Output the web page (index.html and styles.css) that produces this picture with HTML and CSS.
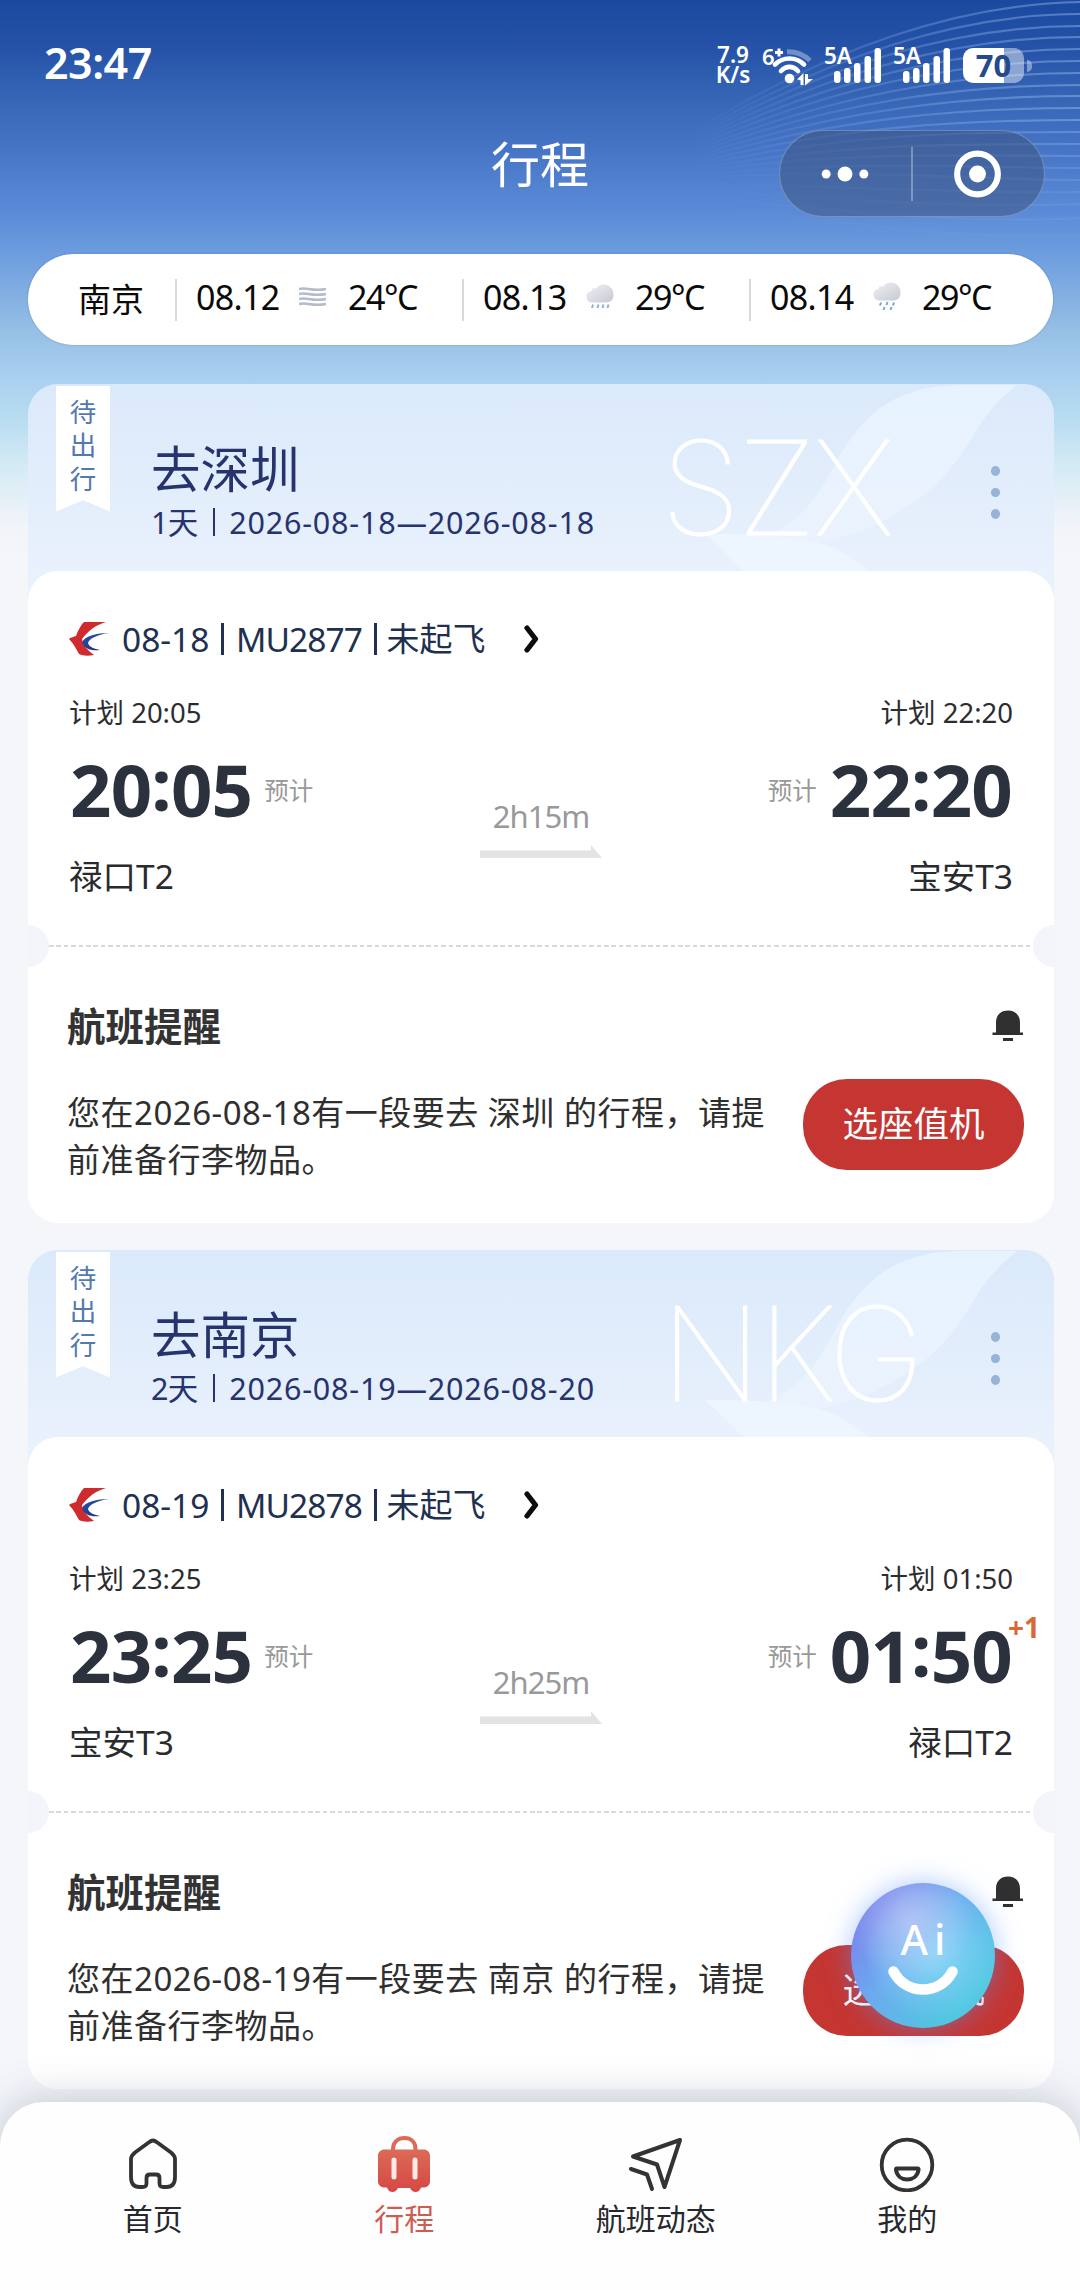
FILE: index.html
```html
<!DOCTYPE html>
<html lang="zh-CN">
<head>
<meta charset="utf-8">
<title>行程</title>
<link rel="stylesheet" href="styles.css">
</head>
<body>
<svg class="defs" aria-hidden="true">
  <defs>
    <linearGradient id="tail" x1="0" y1="0" x2="1" y2="1">
      <stop offset="0" stop-color="#2b52b5"/><stop offset="1" stop-color="#1f2a6b"/>
    </linearGradient>
    <linearGradient id="leafFill" x1="0" y1="0" x2="0" y2="1">
      <stop offset="0" stop-color="#e6f3ff"/><stop offset="1" stop-color="#ebf2fd"/>
    </linearGradient>
    <linearGradient id="cloudFill" x1="0" y1="0" x2="1" y2="1">
      <stop offset="0" stop-color="#f1f1f5"/><stop offset="1" stop-color="#c6c9d2"/>
    </linearGradient>
    <linearGradient id="caseFill" x1="0" y1="0" x2="0" y2="1">
      <stop offset="0" stop-color="#dc6a56"/><stop offset="1" stop-color="#d54845"/>
    </linearGradient>
    <symbol id="airline" viewBox="0 0 40 34">
      <path d="M15 0H37C27 3 20 8 13 17C14 23 18 28 25 33C19 34 14 34 10 32C7 27 5 22 0 17C2 15 5 15 7 14C9 8 12 3 15 0Z" fill="#cf2b2f"/>
      <path d="M40 11C27 13 20 17 19 21C20 25 26 27 31 28C22 29 15 27 13 20C16 14 28 11 40 11Z" fill="url(#tail)"/>
    </symbol>
    <symbol id="chevron" viewBox="0 0 16 28">
      <path d="M3 3L11.500 14L3 25" fill="none" stroke="#0c0c0c" stroke-width="5.200" stroke-linecap="round" stroke-linejoin="round"/>
    </symbol>
    <symbol id="arrow" viewBox="0 0 122 14">
      <path d="M0 5.500H111V0L122 13H0Z" fill="#e3e3e3"/>
    </symbol>
    <symbol id="bell" viewBox="0 0 32 32">
      <path d="M4 22.500V12.500C4 5 9 0.500 16 0.500S28 5 28 12.500V22.500H31V25H0.500V22.500Z" fill="#303030"/>
      <rect x="11" y="28" width="10" height="3" fill="#303030"/>
    </symbol>
    <symbol id="leaf" viewBox="0 0 360 187">
      <path d="M324 1H262C200 3 168 30 140 82C110 140 80 160 24 153C70 172 130 163 180 142C240 112 262 82 283 45C296 24 312 9 324 1Z" fill="url(#leafFill)"/>
      <path d="M10 150C60 150 110 152 140 164C155 171 165 180 174 187H50C38 177 26 162 10 150Z" fill="#edf5fe"/>
    </symbol>
    <symbol id="bars" viewBox="0 0 48 36">
      <g fill="#fff">
        <rect x="0" y="23" width="6.500" height="12" rx="3"/>
        <rect x="10" y="20" width="6.500" height="15" rx="3"/>
        <rect x="20" y="15" width="6.500" height="20" rx="3"/>
        <rect x="30.500" y="8" width="6.500" height="27" rx="3"/>
        <rect x="40.500" y="0" width="6.500" height="35" rx="3"/>
      </g>
    </symbol>
    <symbol id="cloud" viewBox="0 0 28 16" preserveAspectRatio="none">
      <path d="M6 15.500C2.500 15.500 0.500 13.300 0.500 10.500S2.700 6 5.500 5.900C6.500 2.500 9 3.500 10.300 4C11.800 1.500 14.500 0.500 17.500 0.500C23.300 0.500 27.500 4.200 27.500 8.800S24.500 15.500 20 15.500Z" fill="url(#cloudFill)"/>
    </symbol>
  </defs>
</svg>

<div class="screen">
  <svg class="ripples" viewBox="0 0 400 254" aria-hidden="true">
    <defs>
      <linearGradient id="ripple" gradientUnits="userSpaceOnUse" x1="10" y1="0" x2="400" y2="0">
        <stop offset="0" stop-color="#9fc0f2" stop-opacity="0"/>
        <stop offset="0.400" stop-color="#9fc0f2" stop-opacity="0.200"/>
        <stop offset="1" stop-color="#9fc0f2" stop-opacity="0.450"/>
      </linearGradient>
    </defs>
    <g fill="none" stroke="url(#ripple)" stroke-width="2.200">
      <path d="M400 2C290 4 160 40 10 134"/>
      <path d="M400 14C290 14 160 49 10 137"/>
      <path d="M400 26C290 26 160 57 10 140"/>
      <path d="M400 37C290 37 160 66 10 143"/>
      <path d="M400 49C290 49 160 74 10 146"/>
      <path d="M400 61C290 61 160 82 10 149"/>
      <path d="M400 73C290 73 160 91 10 152"/>
      <path d="M400 85C290 85 160 99 10 155"/>
      <path d="M400 96C290 96 160 108 10 158"/>
      <path d="M400 108C290 108 160 116 10 161"/>
      <path d="M400 120C290 120 160 125 10 164"/>
      <path d="M400 132C290 132 160 133 10 167" opacity="0.800"/>
      <path d="M400 144C290 144 160 142 10 170" opacity="0.700"/>
      <path d="M400 156C290 156 160 150 10 173" opacity="0.600"/>
      <path d="M400 168C290 168 160 159 10 176" opacity="0.500"/>
      <path d="M400 180C290 180 160 167 10 179" opacity="0.450"/>
      <path d="M400 192C290 194 160 186 10 184" opacity="0.350"/>
      <path d="M400 204C290 208 160 200 10 190" opacity="0.300"/>
      <path d="M400 218C290 224 160 212 10 196" opacity="0.250"/>
      <path d="M400 236C290 240 160 224 10 202" opacity="0.150"/>
    </g>
  </svg>

  <header class="status">
    <div class="clock">23:47</div>
    <div class="indicators">
      <div class="speed"><span>7.9</span><span>K/s</span></div>
      <svg class="wifi" viewBox="0 0 50 38">
        <text class="wifi-gen" x="-1" y="17">6</text>
        <path d="M12 4.500H20M16 0.500V8.500" stroke="#fff" stroke-width="3" fill="none"/>
        <g fill="none" stroke="#fff" stroke-linecap="round">
          <path d="M24 3.800C33 3.500 41 7 47 12.500" stroke-width="5" opacity="0.350" stroke-linecap="butt"/>
          <path d="M12 16.500C20 8.500 33 8.500 41 16.500" stroke-width="4.600"/>
          <path d="M18 23C23 17.500 30 17.500 35 23" stroke-width="4.600"/>
        </g>
        <circle cx="26.500" cy="30.500" r="4.800" fill="#fff"/>
        <path d="M34 31.500L40.500 25V37H37.500V32ZM42 26H45V31H50L42 37.500Z" fill="#fff"/>
      </svg>
      <div class="signal"><span class="net">5A</span><svg class="signal-bars"><use href="#bars"/></svg></div>
      <div class="signal"><span class="net">5A</span><svg class="signal-bars"><use href="#bars"/></svg></div>
      <div class="battery"><div class="cell">70</div><div class="nub"></div></div>
    </div>
  </header>

  <nav class="titlebar">
    <h1 class="page-title">行程</h1>
    <div class="capsule">
      <svg class="more" viewBox="0 0 132 86"><g fill="#fff"><circle cx="46.500" cy="43" r="4.500"/><circle cx="65.500" cy="43" r="7.500"/><circle cx="84.500" cy="43" r="4.500"/></g></svg>
      <div class="capsule-line"></div>
      <svg class="close" viewBox="0 0 132 86"><circle cx="65" cy="43" r="20.500" fill="none" stroke="#fff" stroke-width="6.200"/><circle cx="65" cy="43" r="8.500" fill="#fff"/></svg>
    </div>
  </nav>

  <section class="weather">
    <div class="city">南京</div>
    <div class="day"><span class="date">08.12</span>
      <svg class="wx" viewBox="0 0 28 28"><g fill="none" stroke="#b4bbcc" stroke-width="2.600"><path d="M0 7C8 4.500 12 10 27 7"/><path d="M0 12C8 9.500 12 15 27 12"/><path d="M0 17C8 14.500 12 20 27 17"/><path d="M0 22C8 19.500 12 25 27 22"/></g></svg>
      <span class="temp">24°C</span></div>
    <div class="day"><span class="date">08.13</span>
      <svg class="wx" viewBox="0 0 28 28"><use href="#cloud" y="2" width="28" height="19"/><g stroke="#8fb2d6" stroke-width="2"><path d="M7 22.500L6 26M12.500 22.500L11.500 26M17.500 22.500L16.500 26M22.500 22.500L21.500 26"/></g></svg>
      <span class="temp">29°C</span></div>
    <div class="day"><span class="date">08.14</span>
      <svg class="wx" viewBox="0 0 28 28"><use href="#cloud" y="0" width="28" height="19"/><g stroke="#7aa5d2" stroke-width="2"><path d="M8 20.500L7 23.500M14.500 20L13.500 23M21 20.500L20 23.500M11.500 25L10.500 28M18.500 25L17.500 28"/></g></svg>
      <span class="temp">29°C</span></div>
  </section>

  <main class="trips">
    <article class="trip">
      <header class="trip-head">
        <svg class="leaf"><use href="#leaf"/></svg>
        <div class="ribbon"><span>待</span><span>出</span><span>行</span></div>
        <div class="trip-name">
          <h2 class="dest">去深圳</h2>
          <p class="range"><span>1天</span><i class="bar"></i><span class="dates">2026-08-18—2026-08-18</span></p>
        </div>
        <div class="code">SZX</div>
        <div class="menu"><i></i><i></i><i></i></div>
      </header>
      <div class="trip-body">
        <div class="flight">
          <svg class="airline"><use href="#airline"/></svg>
          <span>08-18</span><i class="bar"></i><span class="number">MU2877</span><i class="bar"></i><span class="state">未起飞</span>
          <svg class="chevron"><use href="#chevron"/></svg>
        </div>
        <div class="legs">
          <div class="leg">
            <div class="plan">计划 20:05</div>
            <div class="actual"><b class="time">20<span class="colon">:</span>05</b><span class="est">预计</span></div>
            <div class="terminal">禄口T2</div>
          </div>
          <div class="duration"><span>2h15m</span><svg class="arrow"><use href="#arrow"/></svg></div>
          <div class="leg arrive">
            <div class="plan">计划 22:20</div>
            <div class="actual"><span class="est">预计</span><b class="time">22<span class="colon">:</span>20</b></div>
            <div class="terminal">宝安T3</div>
          </div>
        </div>
        <div class="tear"></div>
        <div class="notice">
          <div class="notice-head"><h3>航班提醒</h3><svg class="bell"><use href="#bell"/></svg></div>
          <div class="notice-row">
            <p>您在2026-08-18有一段要去 深圳 的行程，请提<br>前准备行李物品。</p>
            <button class="checkin">选座值机</button>
          </div>
        </div>
      </div>
    </article>

    <article class="trip">
      <header class="trip-head">
        <svg class="leaf"><use href="#leaf"/></svg>
        <div class="ribbon"><span>待</span><span>出</span><span>行</span></div>
        <div class="trip-name">
          <h2 class="dest">去南京</h2>
          <p class="range"><span>2天</span><i class="bar"></i><span class="dates">2026-08-19—2026-08-20</span></p>
        </div>
        <div class="code">NKG</div>
        <div class="menu"><i></i><i></i><i></i></div>
      </header>
      <div class="trip-body">
        <div class="flight">
          <svg class="airline"><use href="#airline"/></svg>
          <span>08-19</span><i class="bar"></i><span class="number">MU2878</span><i class="bar"></i><span class="state">未起飞</span>
          <svg class="chevron"><use href="#chevron"/></svg>
        </div>
        <div class="legs">
          <div class="leg">
            <div class="plan">计划 23:25</div>
            <div class="actual"><b class="time">23<span class="colon">:</span>25</b><span class="est">预计</span></div>
            <div class="terminal">宝安T3</div>
          </div>
          <div class="duration"><span>2h25m</span><svg class="arrow"><use href="#arrow"/></svg></div>
          <div class="leg arrive">
            <div class="plan">计划 01:50</div>
            <div class="actual"><span class="est">预计</span><b class="time">01<span class="colon">:</span>50</b><sup class="plus">+1</sup></div>
            <div class="terminal">禄口T2</div>
          </div>
        </div>
        <div class="tear"></div>
        <div class="notice">
          <div class="notice-head"><h3>航班提醒</h3><svg class="bell"><use href="#bell"/></svg></div>
          <div class="notice-row">
            <p>您在2026-08-19有一段要去 南京 的行程，请提<br>前准备行李物品。</p>
            <button class="checkin">选座值机</button>
          </div>
        </div>
      </div>
    </article>
  </main>

  <div class="assistant">
    <span class="assistant-name">Ai</span>
    <svg class="smile" viewBox="0 0 70 30"><path d="M5.500 5.500C18 29.500 52 29.500 64.500 5.500" fill="none" stroke="#fff" stroke-width="10.500" stroke-linecap="round"/></svg>
  </div>

  <footer class="tabs">
    <a class="tab"><svg class="tab-icon" viewBox="0 0 56 56"><path d="M28 4.500C30 4.500 31 5.500 33 7L46 16.500C49 19 50 20 50 23V41C50 47.500 47 51 41.500 51H38.500C35.500 51 34.500 50 34.500 47V42C34.500 39.500 33.500 38.500 31 38.500H25C22.500 38.500 21.500 39.500 21.500 42V47C21.500 50 20.500 51 17.500 51H14.500C9 51 6 47.500 6 41V23C6 20 7 19 10 16.500L23 7C25 5.500 26 4.500 28 4.500Z" fill="none" stroke="#333" stroke-width="3.800"/></svg><span>首页</span></a>
    <a class="tab active"><svg class="tab-icon" viewBox="0 0 56 56"><path d="M17 15V13C17 6 22 2 28.500 2S39.500 6 39.500 13V15" fill="none" stroke="#dc6a56" stroke-width="4"/><path d="M9 13.500H47C51.500 13.500 54 16 54 20V45C54 49 51.500 51.500 47 51.500H45C44 54.500 42 56 39.500 56S35.500 54.500 34 52H22C20.500 54.500 19 56 16.500 56S12 54.500 11 51.500H9C4.500 51.500 2 49 2 45V20C2 16 4.500 13.500 9 13.500Z" fill="url(#caseFill)"/><path d="M18 24V41M39 24V41" stroke="#ffe9e6" stroke-width="5" stroke-linecap="round"/></svg><span>行程</span></a>
    <a class="tab"><svg class="tab-icon" viewBox="0 0 56 56"><path d="M52 4L5 20.500L29 28.500L36.500 51L52 4Z" fill="none" stroke="#333" stroke-width="4" stroke-linejoin="round"/><path d="M3 33L19 38.500L24 53" fill="none" stroke="#333" stroke-width="4" stroke-linecap="round" stroke-linejoin="round"/></svg><span>航班动态</span></a>
    <a class="tab"><svg class="tab-icon" viewBox="0 0 56 56"><circle cx="28" cy="29" r="25.300" fill="none" stroke="#333" stroke-width="3.800"/><path d="M18 32.500H38.500C39.500 32.500 39.700 33 39.500 34C38.500 40 34 43.500 28.200 43.500S18 40 17 34C16.800 33 17 32.500 18 32.500Z" fill="none" stroke="#333" stroke-width="4"/></svg><span>我的</span></a>
  </footer>
</div>
</body>
</html>
```
FILE: styles.css
```css
* {
  box-sizing: border-box;
}

body {
  margin: 0;
  font-family: "Noto Sans", "Noto Sans CJK SC", sans-serif;
  background: #f4f6fa;
}

h1, h2, h3, p {
  margin: 0;
  font-weight: 400;
}

svg {
  display: block;
}

.defs {
  position: absolute;
  width: 0;
  height: 0;
}

.screen {
  position: relative;
  width: 1080px;
  height: 2290px;
  overflow: hidden;
  background:
    linear-gradient(180deg, #1a499f 0, #2653a8 50px, #3766b6 100px, #4775c6 150px, #5a8ad7 210px, #6b9bde 250px, #95bfe5 330px, #a8cfee 375px, #b8ddf1 420px, #d4eaf5 465px, #f1f4f9 525px, #f4f6fa 560px, #f4f6fa 100%);
}

.ripples {
  position: absolute;
  top: 0;
  right: 0;
  width: 400px;
  height: 254px;
}

/* status bar */
.status {
  position: relative;
  display: flex;
  justify-content: space-between;
  height: 130px;
  padding: 0 48px 0 44px;
  color: #fff;
}

.clock {
  height: 126px;
  font-size: 43px;
  font-weight: 600;
  line-height: 126px;
  letter-spacing: -0.5px;
}

.indicators {
  display: flex;
  gap: 12px;
  padding-top: 48px;
}

.speed {
  display: flex;
  flex-direction: column;
  width: 36px;
  margin-top: -3px;
  font-size: 22.5px;
  font-weight: 600;
  line-height: 19.5px;
  text-align: center;
}

.wifi {
  width: 50px;
  height: 38px;
  overflow: visible;
}

.wifi-gen {
  font-size: 22px;
  font-weight: 600;
  fill: #fff;
}

.signal {
  position: relative;
  width: 57px;
  height: 38px;
}

.net {
  position: absolute;
  top: 0;
  left: -1px;
  font-size: 22.5px;
  font-weight: 600;
  line-height: 16px;
}

.signal-bars {
  width: 48px;
  height: 36px;
  margin-left: 9px;
}

.battery {
  display: flex;
  align-items: center;
  gap: 3px;
  height: 35px;
}

.cell {
  width: 61px;
  height: 35px;
  border-radius: 10px;
  background: linear-gradient(90deg, #fff 41px, rgba(255, 255, 255, 0.45) 41px);
  color: #26498a;
  font-size: 31px;
  font-weight: 700;
  line-height: 34px;
  text-align: center;
}

.nub {
  width: 5px;
  height: 12px;
  border-radius: 0 5px 5px 0;
  background: rgba(255, 255, 255, 0.4);
}

/* title bar */
.titlebar {
  position: relative;
  display: grid;
  grid-template-columns: 1fr auto 1fr;
  height: 124px;
}

.page-title {
  grid-column: 2;
  height: 67px;
  color: #fff;
  font-size: 49px;
  line-height: 69px;
}

.capsule {
  display: flex;
  align-items: center;
  justify-self: end;
  width: 266px;
  height: 87px;
  margin-right: 35px;
  border: 1.5px solid rgba(255, 255, 255, 0.25);
  border-radius: 44px;
  background: rgba(58, 80, 122, 0.5);
}

.more,
.close {
  width: 131px;
  height: 86px;
}

.capsule-line {
  width: 1.5px;
  height: 54px;
  background: rgba(255, 255, 255, 0.3);
}

/* weather strip */
.weather {
  position: relative;
  display: grid;
  grid-template-columns: 147px 287px 287px 1fr;
  align-items: center;
  width: 1025px;
  height: 91px;
  margin-left: 28px;
  border-radius: 46px;
  background: #fff;
  box-shadow: 0 0 2px rgba(60, 80, 120, 0.4);
  color: #0a0a0a;
  font-size: 34px;
  line-height: 42px;
}

.city {
  padding-left: 50px;
  font-size: 33px;
}

.day {
  display: grid;
  grid-template-columns: 103px 49px 1fr;
  align-items: center;
  height: 42px;
  padding-left: 19px;
  border-left: 2px solid #d9d9db;
  letter-spacing: -0.7px;
  line-height: 36px;
}

.date,
.temp {
  margin-top: -6px;
}

.temp {
  letter-spacing: -1.5px;
}

.wx {
  width: 28px;
  height: 28px;
  margin-top: -7px;
}

/* trip cards */
.trips {
  position: relative;
  display: flex;
  flex-direction: column;
  gap: 27px;
  padding: 39px 26px 0 28px;
}

.trip {
  height: 839px;
  border-radius: 30px;
  overflow: hidden;
  background: linear-gradient(180deg, #dae9fb 0, #e1edfb 90px, #e9f1fd 187px, #eaf3fe 220px, #fff 240px);
}

.trip-head {
  position: relative;
  display: flex;
  height: 187px;
  padding-left: 28px;
}

.leaf {
  position: absolute;
  top: 0;
  right: 0;
  width: 360px;
  height: 187px;
}

.ribbon {
  position: relative;
  display: flex;
  flex-direction: column;
  align-items: center;
  width: 54px;
  height: 126px;
  margin-top: 1.5px;
  padding-top: 10px;
  background: #fff;
  clip-path: polygon(0 0, 100% 0, 100% 100%, 50% 91%, 0 100%);
  color: #5379b0;
  font-size: 26.5px;
  line-height: 33.5px;
}

.trip-name {
  position: relative;
  padding: 53px 0 0 41px;
  color: #26336d;
}

.dest {
  font-size: 49.5px;
  line-height: 64px;
}

.range {
  display: flex;
  align-items: center;
  height: 41px;
  font-size: 30.5px;
  letter-spacing: -0.6px;
  line-height: 40px;
}

.dates {
  letter-spacing: 0.8px;
}

.bar {
  width: 2.5px;
  height: 28px;
  margin: 0 14px 0 15px;
  background: currentColor;
}

.code {
  position: absolute;
  top: 54px;
  left: 633px;
  color: #fff;
  font-family: Inter, sans-serif;
  font-size: 130px;
  font-weight: 100;
  letter-spacing: -3px;
  line-height: 100px;
  -webkit-text-stroke: 1.2px #fff;
}

.menu {
  position: absolute;
  top: 82px;
  right: 54px;
  display: flex;
  flex-direction: column;
  gap: 12px;
}

.menu i {
  width: 9px;
  height: 9.5px;
  border-radius: 50%;
  background: #97b3d6;
}

.trip-body {
  height: 652px;
  padding-top: 45px;
  border-radius: 30px;
  background: #fff;
}

.flight {
  display: flex;
  align-items: center;
  height: 46px;
  padding-left: 41px;
  color: #22304f;
  font-size: 33.5px;
  line-height: 46px;
}

.flight .bar {
  height: 32px;
  margin: 0 12px 0 12px;
}

.flight .number {
  letter-spacing: -0.9px;
}

.flight .state {
  margin-left: -2px;
  font-size: 33px;
}

.airline {
  width: 40px;
  height: 34px;
  margin-right: 13px;
}

.chevron {
  width: 16px;
  height: 28px;
  margin-left: 38px;
}

.legs {
  display: grid;
  grid-template-columns: 1fr 122px 1fr;
  height: 237px;
  padding: 32px 41px 0 41px;
}

.plan {
  color: #2c2d30;
  font-size: 27.5px;
  line-height: 37px;
}

.actual {
  position: relative;
  display: flex;
  align-items: center;
  gap: 12px;
  height: 80px;
  margin-top: 18px;
}

.time {
  padding-left: 1px;
  color: #2b323d;
  font-size: 72.5px;
  font-weight: 700;
  letter-spacing: -0.8px;
  line-height: 80px;
}

.colon {
  position: relative;
  top: -6px;
}

.est {
  padding-top: 4px;
  color: #999;
  font-size: 24.5px;
  line-height: 36px;
}

.terminal {
  margin-top: 24px;
  color: #2a2b2e;
  font-size: 33.5px;
  line-height: 46px;
}

.arrive {
  display: flex;
  flex-direction: column;
  align-items: flex-end;
}

.arrive .time {
  padding-right: 1px;
}

.plus {
  position: absolute;
  top: -5px;
  right: -27px;
  color: #d96836;
  font-size: 28px;
  font-weight: 700;
  line-height: 34px;
}

.duration {
  display: flex;
  flex-direction: column;
  align-items: center;
  padding-top: 102px;
  color: #999;
  font-size: 31px;
  letter-spacing: -1px;
  line-height: 40px;
}

.arrow {
  width: 122px;
  height: 14px;
  margin-top: 9px;
}

.tear {
  position: relative;
  display: flex;
  align-items: center;
  height: 42px;
  margin-top: 26px;
  background:
    radial-gradient(circle at 0 50%, #f4f5fa 20.5px, transparent 21.5px),
    radial-gradient(circle at 100% 50%, #f4f5fa 20.5px, transparent 21.5px);
}

.tear::before {
  content: "";
  flex: 1;
  height: 2px;
  margin: 0 21px;
  background: repeating-linear-gradient(90deg, #d9d9d9 0, #d9d9d9 4.5px, transparent 4.5px, transparent 7.4px);
}

.notice {
  padding: 34px 30px 0 39px;
}

.notice-head {
  display: flex;
  align-items: center;
  justify-content: space-between;
  height: 50px;
}

.notice-head h3 {
  color: #333;
  font-size: 38.5px;
  font-weight: 700;
  line-height: 50px;
}

.bell {
  width: 32px;
  height: 32px;
}

.notice-row {
  display: flex;
  align-items: flex-start;
  justify-content: space-between;
  margin-top: 28px;
}

.notice-row p {
  padding-top: 9.5px;
  color: #2f2f2f;
  font-size: 33px;
  letter-spacing: 0.5px;
  line-height: 47.5px;
  white-space: nowrap;
}

.checkin {
  width: 221px;
  height: 91px;
  padding: 0 0 3px;
  border: 0;
  border-radius: 44px;
  background: #c53632;
  color: #fff;
  font-family: inherit;
  font-size: 35.5px;
  line-height: 48px;
}

/* floating assistant */
.assistant {
  position: absolute;
  top: 1883px;
  left: 851px;
  display: flex;
  flex-direction: column;
  align-items: center;
  width: 144px;
  height: 145px;
  padding-top: 34px;
  border-radius: 50%;
  background:
    radial-gradient(circle at 42% 26%, rgba(200, 200, 245, 0.7) 0, rgba(170, 195, 245, 0) 45%),
    radial-gradient(circle at 58% 48%, rgba(140, 220, 250, 0.9) 0, rgba(110, 200, 240, 0.1) 62%),
    linear-gradient(130deg, #7a7cee 12%, #6ba8ee 45%, #4cc6de 80%);
  box-shadow: 0 0 26px rgba(90, 150, 255, 0.5);
}

.assistant-name {
  color: #fff;
  font-size: 42px;
  font-weight: 500;
  letter-spacing: 6px;
  line-height: 44px;
  transform: translateX(3px);
}

.smile {
  width: 70px;
  height: 30px;
  margin-top: 5px;
}

/* bottom tabs */
.tabs {
  position: absolute;
  right: 0;
  bottom: 0;
  left: 0;
  display: grid;
  grid-template-columns: repeat(4, 1fr);
  height: 188px;
  padding: 34px 47px 0 27px;
  border-radius: 44px 44px 0 0;
  background: #fefefe;
  box-shadow: 0 0 46px rgba(50, 65, 95, 0.28);
}

.tab {
  display: flex;
  flex-direction: column;
  align-items: center;
  color: #26282c;
  font-size: 30px;
  line-height: 40px;
}

.tab.active {
  color: #cd5c52;
}

.tab-icon {
  width: 56px;
  height: 56px;
  margin-bottom: 7px;
}
```
